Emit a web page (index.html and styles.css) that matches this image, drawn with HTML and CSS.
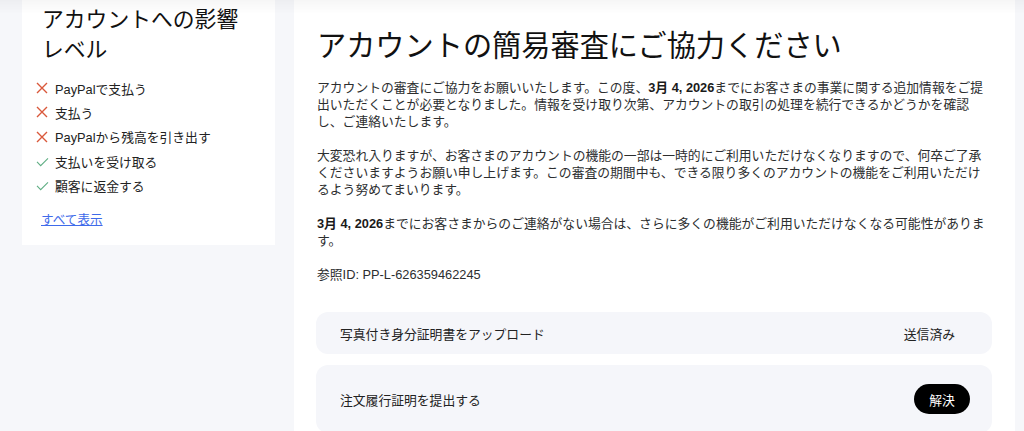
FILE: index.html
```html
<!DOCTYPE html>
<html lang="ja">
<head>
<meta charset="utf-8">
<title>アカウントの簡易審査</title>
<link rel="stylesheet" href="styles.css">
</head>
<body>
<div class="top-shadow"></div>
<div class="page">
  <aside class="impact-card">
    <h2 class="impact-title">アカウントへの影響<br>レベル</h2>
    <ul class="impact-list">
      <li class="impact-item"><svg class="icon-x" viewBox="0 0 12 12"><path d="M1 1L11 11M11 1L1 11"/></svg><span>PayPalで支払う</span></li>
      <li class="impact-item"><svg class="icon-x" viewBox="0 0 12 12"><path d="M1 1L11 11M11 1L1 11"/></svg><span>支払う</span></li>
      <li class="impact-item"><svg class="icon-x" viewBox="0 0 12 12"><path d="M1 1L11 11M11 1L1 11"/></svg><span>PayPalから残高を引き出す</span></li>
      <li class="impact-item"><svg class="icon-check" viewBox="0 0 14 12"><path d="M1 6.5L5 10.5L13 2.5"/></svg><span>支払いを受け取る</span></li>
      <li class="impact-item"><svg class="icon-check" viewBox="0 0 14 12"><path d="M1 6.5L5 10.5L13 2.5"/></svg><span>顧客に返金する</span></li>
    </ul>
    <a class="show-all" href="#">すべて表示</a>
  </aside>
  <main class="review-card">
    <h1 class="review-title">アカウントの簡易審査にご協力ください</h1>
    <p class="para">アカウントの審査にご協力をお願いいたします。この度、<b>3月 4, 2026</b>までにお客さまの事業に関する追加情報をご提出いただくことが必要となりました。情報を受け取り次第、アカウントの取引の処理を続行できるかどうかを確認し、ご連絡いたします。</p>
    <p class="para">大変恐れ入りますが、お客さまのアカウントの機能の一部は一時的にご利用いただけなくなりますので、何卒ご了承くださいますようお願い申し上げます。この審査の期間中も、できる限り多くのアカウントの機能をご利用いただけるよう努めてまいります。</p>
    <p class="para"><b>3月 4, 2026</b>までにお客さまからのご連絡がない場合は、さらに多くの機能がご利用いただけなくなる可能性があります。</p>
    <p class="para para-last">参照ID: PP-L-626359462245</p>
    <div class="tasks">
      <div class="task">
        <span class="task-label">写真付き身分証明書をアップロード</span>
        <span class="task-status">送信済み</span>
      </div>
      <div class="task task-open">
        <span class="task-label">注文履行証明を提出する</span>
        <button class="resolve-btn" type="button">解決</button>
      </div>
    </div>
  </main>
</div>
</body>
</html>
```

FILE: styles.css
```css
* { box-sizing: border-box; }
html, body { margin: 0; padding: 0; }
body {
  background: #f6f7fa;
  font-family: "Liberation Sans", "Noto Sans CJK JP", sans-serif;
  color: #2c2e2f;
  height: 431px;
  overflow: hidden;
}
.top-shadow {
  position: fixed;
  left: 0; top: 0; right: 0;
  height: 14px;
  background: linear-gradient(rgba(0,0,0,0.035), rgba(0,0,0,0));
  pointer-events: none;
  z-index: 5;
}
.page {
  display: flex;
  align-items: flex-start;
  gap: 19px;
  padding-left: 22px;
}
.impact-card {
  width: 253px;
  background: #fff;
  padding: 5px 20px 17px 14px;
}
.impact-title {
  margin: 0 0 11px 6px;
  font-weight: 400;
  font-size: 21.8px;
  line-height: 30px;
  color: #111;
}
.impact-list {
  list-style: none;
  margin: 0;
  padding: 0;
}
.impact-item {
  display: flex;
  align-items: center;
  gap: 7px;
  height: 24.3px;
  font-size: 12.8px;
  color: #222;
}
.icon-x { width: 12px; height: 12px; flex: none; }
.icon-x path { stroke: #d9583b; stroke-width: 1.4; fill: none; }
.icon-check { width: 13px; height: 11px; flex: none; margin-left: -0.5px; margin-right: -0.5px; }
.icon-check path { stroke: #5fae84; stroke-width: 1.2; fill: none; }
.show-all {
  display: inline-block;
  margin: 12px 0 0 5px;
  font-size: 12.6px;
  color: #3f6bea;
  text-decoration: underline;
}
.review-card {
  width: 721px;
  min-height: 460px;
  background: #fff;
  padding: 26px 23px 0 22px;
}
.review-title {
  margin: 0 0 13px 1px;
  font-weight: 400;
  font-size: 29.2px;
  line-height: 40px;
  color: #111;
}
.para {
  margin: 0 0 17px 1px;
  font-size: 12.8px;
  line-height: 17px;
  color: #2c2e2f;
}
.para-last { margin-bottom: 0; }
.para b { font-weight: 700; color: #1a1a1a; }
.tasks {
  display: flex;
  flex-direction: column;
  gap: 11px;
  margin-top: 29px;
}
.task {
  display: flex;
  align-items: center;
  justify-content: space-between;
  height: 42px;
  padding: 0 37px 0 24px;
  background: #f5f6fa;
  border-radius: 12px;
  font-size: 12.8px;
  color: #222;
}
.task-open {
  height: 68px;
  padding-right: 22px;
}
.resolve-btn {
  width: 56px;
  height: 30px;
  border: none;
  border-radius: 15px;
  background: #000;
  color: #fff;
  font-family: inherit;
  font-size: 12.8px;
  padding: 0;
}
```
